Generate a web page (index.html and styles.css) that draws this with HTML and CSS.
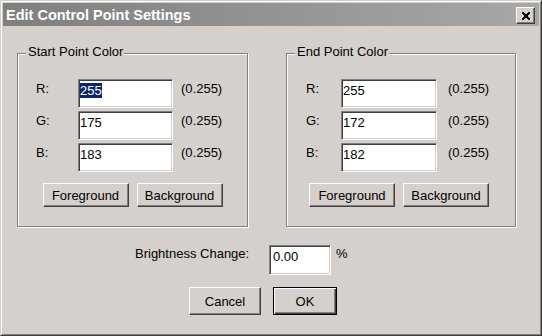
FILE: index.html
```html
<!DOCTYPE html>
<html>
<head>
<meta charset="utf-8">
<link rel="stylesheet" href="styles.css">
</head>
<body>
<div class="window">
  <div class="frame">
    <div class="titlebar">
      <span class="title">Edit Control Point Settings</span>
      <span class="close">
        <svg width="8" height="8" viewBox="0 0 8 8" shape-rendering="crispEdges"><path fill="#000" d="M0 0h2v1h-2z M6 0h2v1h-2z M0 1h3v1h-3z M5 1h3v1h-3z M1 2h6v1h-6z M2 3h4v2h-4z M1 5h6v1h-6z M0 6h3v1h-3z M5 6h3v1h-3z M0 7h2v1h-2z M6 7h2v1h-2z"/></svg>
      </span>
    </div>
    <div class="content">
      <div class="groups">
        <div class="group group-start">
          <div class="legend">Start Point Color</div>
          <div class="rows">
            <span class="lbl">R:</span><div class="field"><span class="sel">255</span></div><span class="range">(0.255)</span>
            <span class="lbl">G:</span><div class="field">175</div><span class="range">(0.255)</span>
            <span class="lbl">B:</span><div class="field">183</div><span class="range">(0.255)</span>
          </div>
          <div class="btns">
            <div class="btn">Foreground</div>
            <div class="btn">Background</div>
          </div>
        </div>
        <div class="group group-end">
          <div class="legend">End Point Color</div>
          <div class="rows">
            <span class="lbl">R:</span><div class="field">255</div><span class="range">(0.255)</span>
            <span class="lbl">G:</span><div class="field">172</div><span class="range">(0.255)</span>
            <span class="lbl">B:</span><div class="field">182</div><span class="range">(0.255)</span>
          </div>
          <div class="btns">
            <div class="btn">Foreground</div>
            <div class="btn">Background</div>
          </div>
        </div>
      </div>
      <div class="brightness">
        <span class="b-lbl">Brightness Change:</span>
        <div class="field field-sm">0.00</div>
        <span class="pct">%</span>
      </div>
      <div class="actions">
        <div class="btn btn-cancel">Cancel</div>
        <div class="btn btn-ok">OK</div>
      </div>
    </div>
  </div>
</div>
</body>
</html>
```

FILE: styles.css
```css
* { box-sizing: border-box; }
body {
  margin: 0;
  font: 13px/15px "Liberation Sans", Arial, sans-serif;
  color: #000;
}
.window {
  width: 542px;
  height: 336px;
  border: 1px solid;
  border-color: #d4d0c8 #404040 #404040 #d4d0c8;
  background: #d6d0cc;
}
.frame {
  height: 100%;
  border: 1px solid;
  border-color: #fff #808080 #808080 #fff;
  padding: 1px;
  display: flex;
  flex-direction: column;
}
.titlebar {
  height: 23px;
  flex: none;
  display: flex;
  justify-content: space-between;
  align-items: flex-start;
  background: linear-gradient(to right, #7f7f7f, #a8a8a8);
  color: #fff;
}
.title {
  font-weight: bold;
  font-size: 14.5px;
  line-height: 17px;
  margin: 4px 0 0 3px;
}
.close {
  width: 19px;
  height: 17px;
  margin: 4px 4px 0 0;
  display: flex;
  align-items: center;
  justify-content: center;
  background: #d6d0cc;
  border: 1px solid;
  border-color: #fff #404040 #404040 #fff;
  box-shadow: inset -1px -1px #808080;
}
.close svg { display: block; }
.groups {
  display: flex;
  gap: 38px;
  margin: 27px 0 0 14px;
}
.group {
  position: relative;
  height: 174px;
  border: 1px solid #808080;
  box-shadow: inset 1px 1px #fff, 1px 1px #fff;
  padding-top: 25px;
}
.group-start { width: 231px; }
.group-end { width: 230px; }
.legend {
  position: absolute;
  top: -10px;
  left: 8px;
  padding: 0 1px 0 2px;
  background: #d6d0cc;
}
.rows {
  display: grid;
  row-gap: 3px;
  align-items: start;
}
.group-start .rows {
  padding-left: 18px;
  grid-template-columns: 34px 95px auto;
  column-gap: 8px;
}
.group-end .rows {
  padding-left: 19px;
  grid-template-columns: 24px 96px auto;
  column-gap: 11px;
}
.lbl, .range { padding-top: 2px; }
.field {
  height: 29px;
  background: #fff;
  border: 1px solid;
  border-color: #808080 #fff #fff #808080;
  box-shadow: inset 1px 1px #404040, inset -1px -1px #d4d0c8;
  padding: 3px 0 0 1px;
}
.sel {
  background: #0a246a;
  color: #fff;
}
.btns {
  display: flex;
  justify-content: center;
  gap: 8px;
  margin-top: 11px;
}
.group-end .btns { padding-right: 4px; }
.btn {
  width: 86px;
  height: 24px;
  display: flex;
  align-items: center;
  justify-content: center;
  border: 1px solid;
  border-color: #fff #404040 #404040 #fff;
  box-shadow: inset -1px -1px #808080;
}
.brightness {
  display: flex;
  align-items: flex-start;
  margin: 18px 0 0 132px;
}
.b-lbl {
  width: 134px;
  padding-top: 1px;
}
.field-sm {
  width: 62px;
  height: 30px;
  padding-left: 3px;
}
.pct {
  margin-left: 5px;
  padding-top: 1px;
}
.actions {
  display: flex;
  gap: 12px;
  margin: 12px 0 0 186px;
}
.btn-cancel {
  width: 72px;
  height: 28px;
}
.btn-ok {
  width: 64px;
  height: 28px;
  border: 1px solid #000;
  box-shadow: inset 1px 1px #fff, inset -1px -1px #404040, inset -2px -2px #808080;
}
```
